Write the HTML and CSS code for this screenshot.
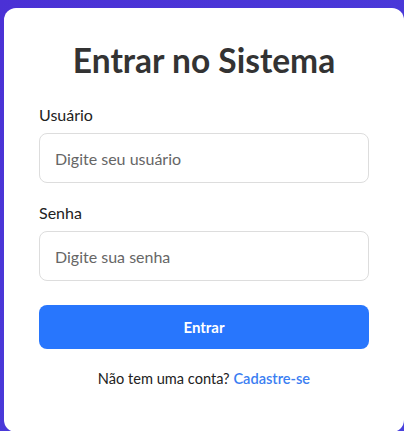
FILE: index.html
```html
<!DOCTYPE html>
<html lang="pt-BR">
<head>
<meta charset="utf-8">
<title>Entrar no Sistema</title>
<link rel="stylesheet" href="styles.css">
</head>
<body>
<div class="card">
  <h1 class="title">Entrar no Sistema</h1>
  <form class="form">
    <label class="field">
      <span class="label">Usuário</span>
      <input class="input" type="text" placeholder="Digite seu usuário">
    </label>
    <label class="field">
      <span class="label">Senha</span>
      <input class="input" type="password" placeholder="Digite sua senha">
    </label>
    <button class="btn" type="button">Entrar</button>
  </form>
  <p class="footer">Não tem uma conta? <a class="link" href="#">Cadastre-se</a></p>
</div>
</body>
</html>
```
FILE: styles.css
```css
* { box-sizing: border-box; }
html, body { height: 100%; }
body {
  margin: 0;
  padding: 8px 0 0 4px;
  overflow: hidden;
  background: linear-gradient(135deg, #4b31d5 0%, #4840dc 100%);
  font-family: "Lato", "Noto Sans", sans-serif;
  color: #222;
}
.card {
  width: 400px;
  background: #fff;
  border-radius: 12px;
  min-height: 424px;
  padding: 32px 35px 20px;
}
.title {
  margin: 0 0 26px;
  text-align: center;
  font-size: 33.5px;
  font-weight: 700;
  color: #333;
  line-height: 1.2;
}
.form { display: flex; flex-direction: column; }
.field { display: flex; flex-direction: column; margin-bottom: 21px; }
.label { font-size: 16px; margin-bottom: 9px; color: #222; line-height: 18px; }
.input {
  height: 50px;
  border: 1px solid #ddd;
  border-radius: 8px;
  padding: 0 15px;
  font: inherit;
  font-size: 16px;
  color: #333;
}
.input::placeholder { color: #666; }
.btn {
  margin-top: 3px;
  height: 44px;
  border: none;
  border-radius: 8px;
  background: #2876fd;
  color: #fff;
  font: inherit;
  font-size: 15px;
  font-weight: 700;
}
.footer { margin: 21px 0 0; text-align: center; font-size: 14.6px; color: #222; }
.link { color: #3b7ef2; text-decoration: none; font-weight: 600; }
```
